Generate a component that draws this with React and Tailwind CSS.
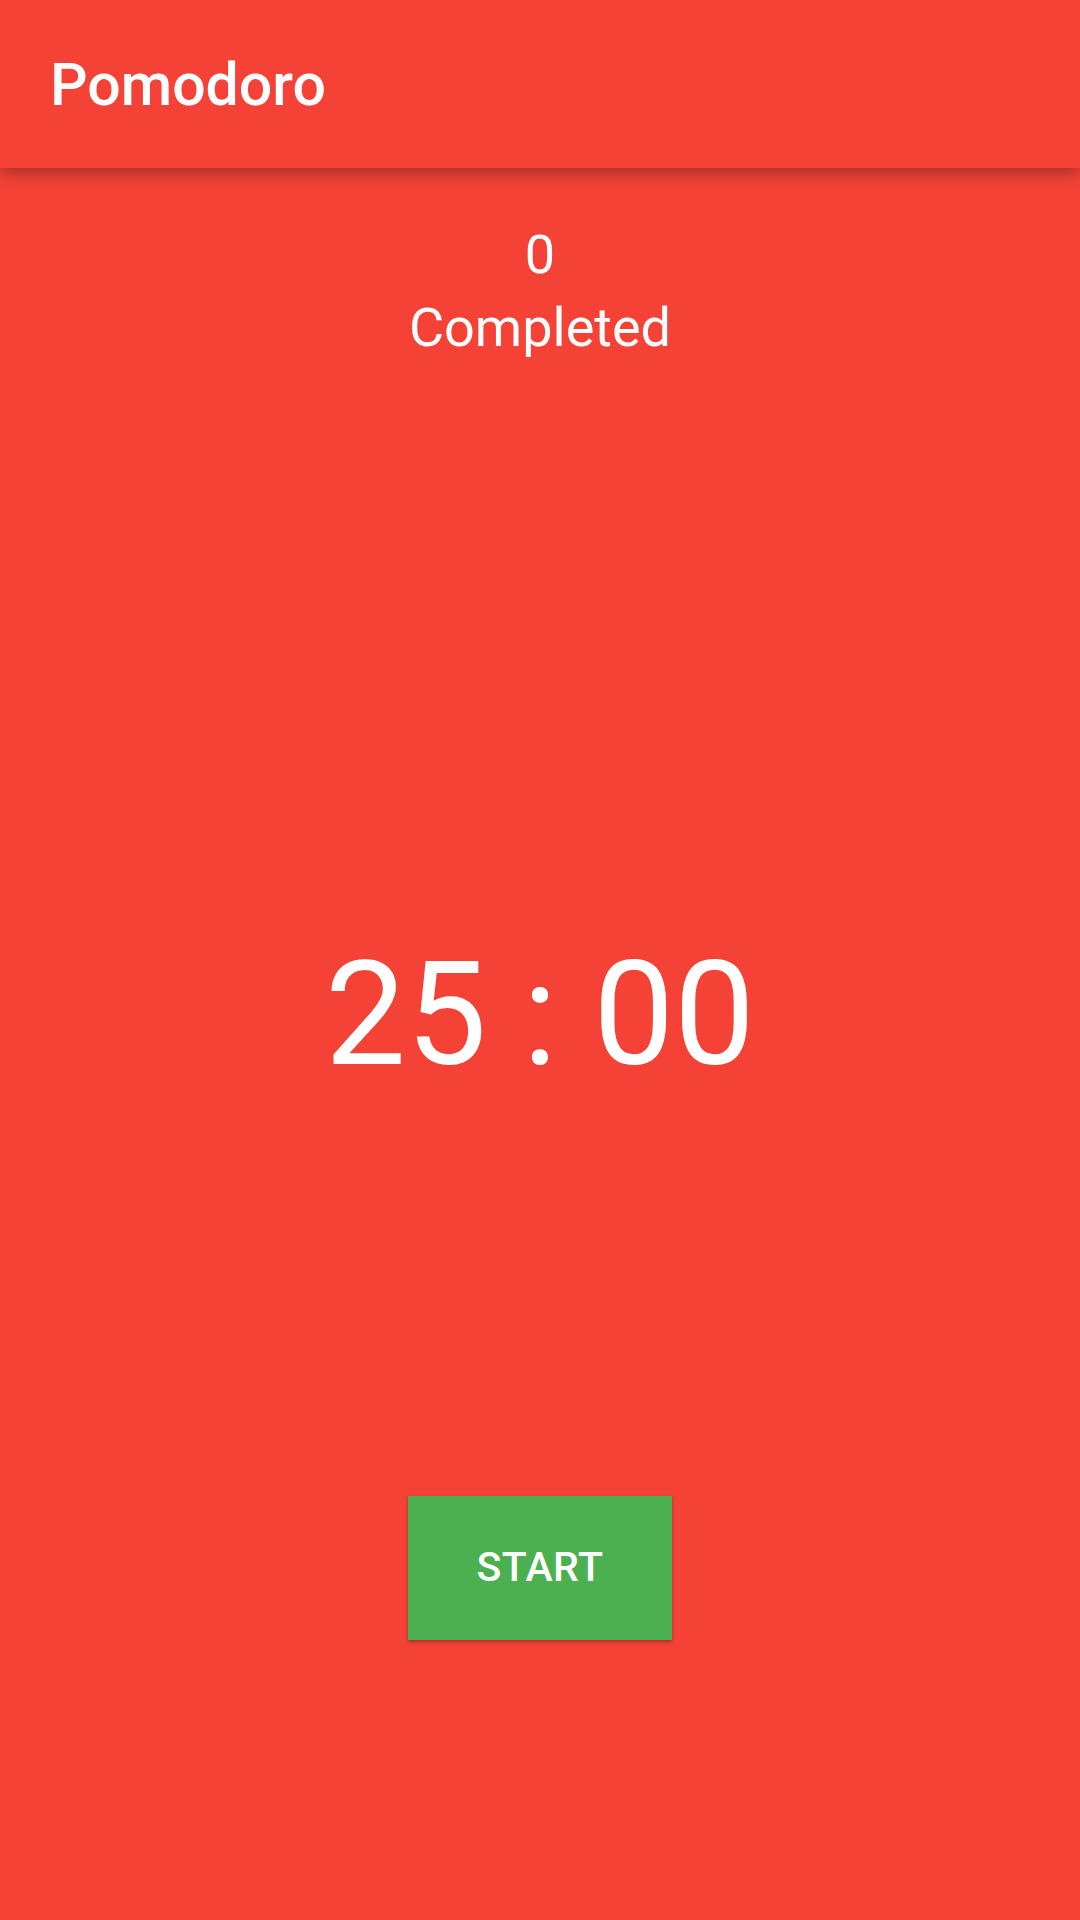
export default function App() {
  return (
    <div
      className="w-[1080px] h-[1920px] bg-[#F44336] flex flex-col overflow-hidden"
      style={{ fontFamily: "Roboto, 'Noto Sans', sans-serif" }}
    >
      <header className="relative z-10 h-[168px] shrink-0 bg-[#F44336] flex items-center px-[50px] shadow-[0_6px_14px_rgba(0,0,0,0.3)]">
        <h1 className="text-white text-[59px] font-medium leading-none">Pomodoro</h1>
      </header>
      <main className="flex flex-col items-center text-white">
        <div className="mt-[55px] text-[54px] leading-[64px]">0</div>
        <div className="mt-[9px] text-[54px] leading-[64px]">Completed</div>
        <div className="mt-[570px] text-[144px] leading-[170px]">25 : 00</div>
        <button className="mt-[396px] w-[264px] h-[144px] bg-[#4CAF50] text-white text-[41px] font-medium tracking-[0.5px] shadow-[0_2px_4px_rgba(0,0,0,0.3)] flex items-center justify-center">
          START
        </button>
      </main>
    </div>
  );
}
